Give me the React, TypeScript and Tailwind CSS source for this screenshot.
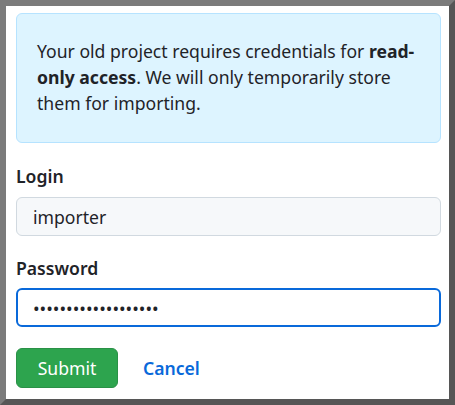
export default function App() {
  return (
    <div className="h-[405px] w-[455px] border-[6px] border-t-[#7b7b7b] border-l-[#7b7b7b] border-b-[#565656] border-r-[#565656] bg-white font-['Noto_Sans',sans-serif] text-[17.6px] text-[#1f2328]">
      <div className="flex flex-col pl-[10px] pr-2 pt-[7px]">
        {/* Notice */}
        <div className="rounded-md border border-[#b6e3ff] bg-[#ddf4ff] px-5 pt-6 pb-[26px] leading-[26px]">
          Your old project requires credentials for <b className="font-bold">read-only access</b>. We will only temporarily store
          them for importing.
        </div>

        <label className="mt-[21px] mb-[9px] font-semibold leading-6">Login</label>
        <input
          readOnly
          value="importer"
          className="h-[39px] w-full rounded-md border border-[#d1d9e0] bg-[#f6f8fa] px-4 text-[17.6px] text-[#1f2328] outline-none"
        />

        <label className="mt-5 mb-2 font-semibold leading-6">Password</label>
        <input
          readOnly
          type="password"
          value="aaaaaaaaaaaaaaaaaaa"
          className="h-[39px] w-full rounded-md border-2 border-[#0969da] bg-white px-[15px] text-[17.6px] text-[#1f2328] outline-none"
        />

        <div className="mt-[21px] flex items-center gap-[25px]">
          <button className="h-10 w-[102px] rounded-md border border-[#2a9147] bg-[#2da44e] text-[17.6px] text-white">
            Submit
          </button>
          <a href="#" className="font-semibold text-[#0969da]">
            Cancel
          </a>
        </div>
      </div>
    </div>
  )
}
